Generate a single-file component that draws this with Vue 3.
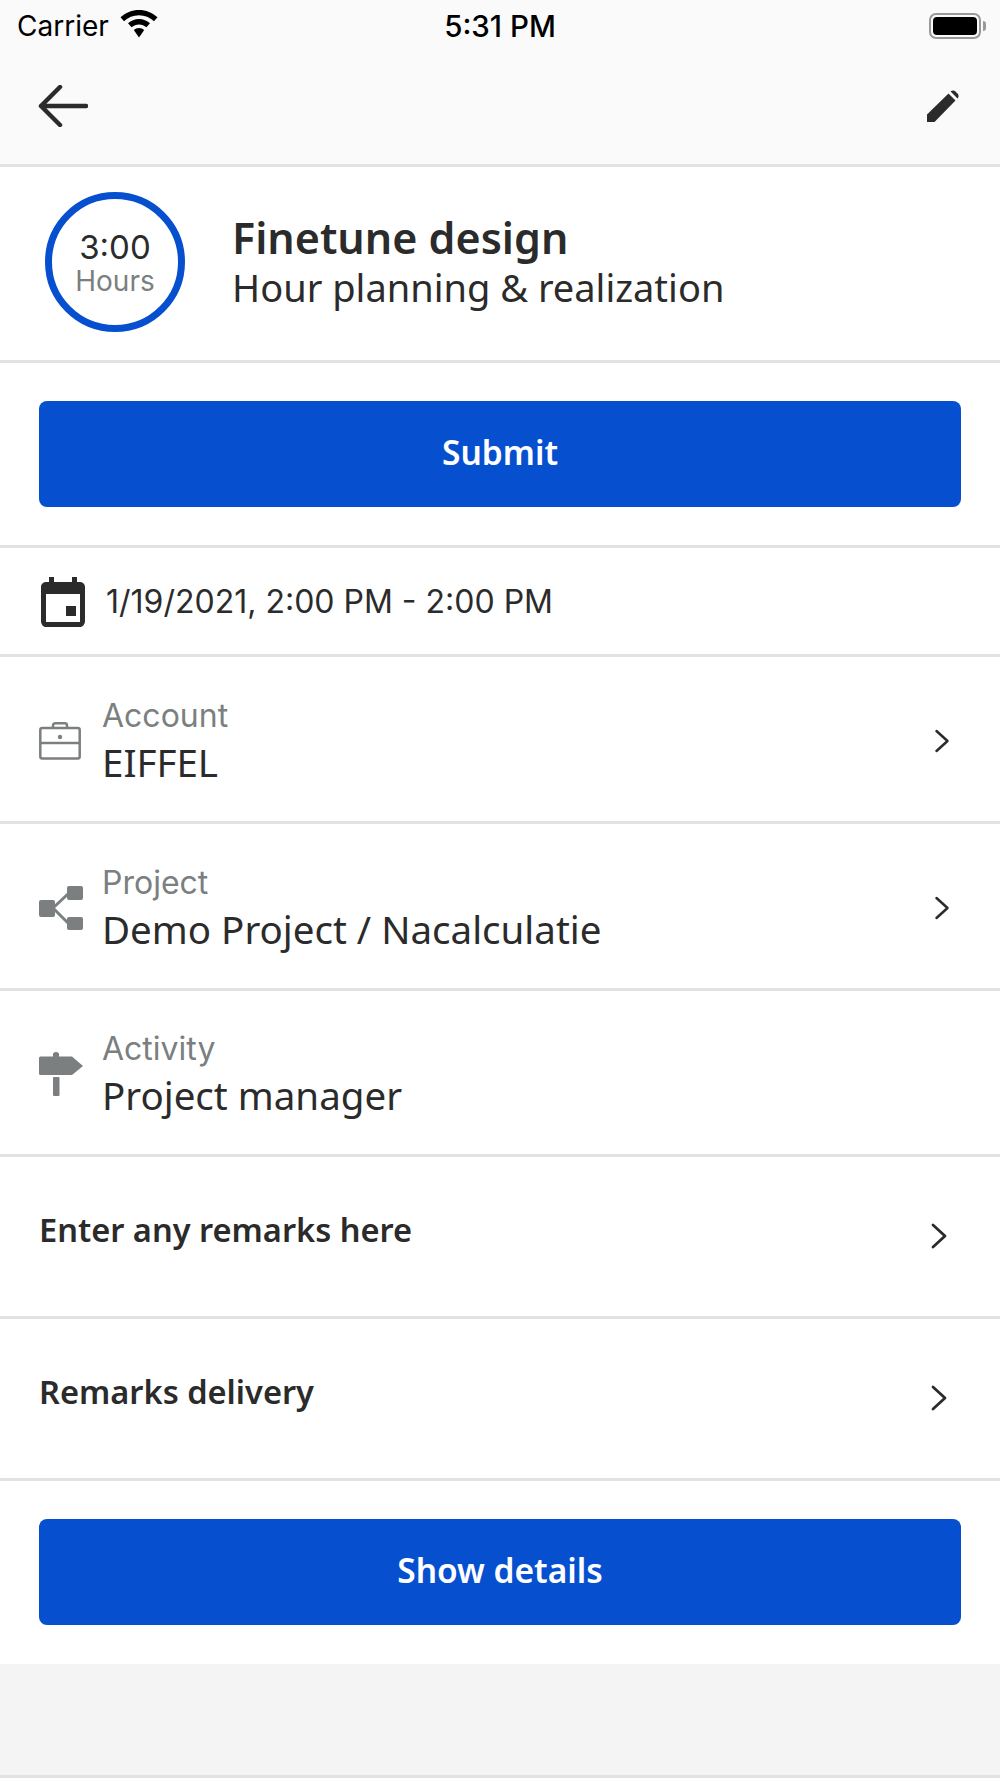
<script setup>
const infoRows = [
  { key: 'account', label: 'Account', value: 'EIFFEL', chevron: true },
  { key: 'project', label: 'Project', value: 'Demo Project / Nacalculatie', chevron: true },
  { key: 'activity', label: 'Activity', value: 'Project manager', chevron: false },
]
const remarkRows = ['Enter any remarks here', 'Remarks delivery']
</script>

<template>
  <div class="page">
    <!-- top bar -->
    <header class="top">
      <div class="status">
        <div class="status-left">
          <span class="carrier">Carrier</span>
          <svg class="wifi" width="38" height="28" viewBox="0 0 38 28">
            <path d="M19 0C12 0 5.500 2.700 0.500 7.300L4 11.200C8 7.500 13.300 5.200 19 5.200S30 7.500 34 11.200L37.500 7.300C32.500 2.700 26 0 19 0Z" />
            <path d="M19 9C14.800 9 11 10.600 8 13.300L11.600 17.300C13.600 15.500 16.200 14.400 19 14.400S24.400 15.500 26.400 17.300L30 13.300C27 10.600 23.200 9 19 9Z" />
            <path d="M19 18C17 18 15.200 18.700 13.800 20L19 27.500L24.200 20C22.800 18.700 21 18 19 18Z" />
          </svg>
        </div>
        <span class="time">5:31 PM</span>
        <div class="battery">
          <div class="battery-shell"><div class="battery-fill"></div></div>
          <div class="battery-nub"></div>
        </div>
      </div>
      <nav class="nav">
        <svg width="50" height="42" viewBox="0 0 50 42" fill="none" stroke="#2b2b2b" stroke-width="4.500" stroke-linecap="round" stroke-linejoin="round">
          <path d="M48 21H3M22 2L3 21L22 40" />
        </svg>
        <svg width="34" height="34" viewBox="0 0 34 34" fill="#2b2b2b">
          <path d="M1 25.500L22.500 4.500L29.500 11.500L8.500 33H1Z" />
          <path d="M24.800 2.300C26 1.100 28 1.100 29.200 2.300L31.700 4.800C32.900 6 32.900 8 31.700 9.200L31.500 9.400L24.600 2.500Z" />
        </svg>
      </nav>
    </header>

    <!-- summary -->
    <section class="summary">
      <div class="ring">
        <span class="ring-time">3:00</span>
        <span class="ring-unit">Hours</span>
      </div>
      <div>
        <div class="summary-title">Finetune design</div>
        <div class="summary-sub">Hour planning &amp; realization</div>
      </div>
    </section>

    <section class="action action-submit">
      <button class="btn">Submit</button>
    </section>

    <!-- date -->
    <section class="date-row">
      <svg class="date-icon" width="44" height="50" viewBox="0 0 44 50" fill="#2b2b2b">
        <path fill-rule="evenodd" d="M8 0H13V5H31V0H36V5H39C41.800 5 44 7.200 44 10V44C44 47.300 41.800 50 39 50H5C2.200 50 0 47.300 0 44V10C0 7.200 2.200 5 5 5H8ZM5 17V45H39V17Z" />
        <rect x="25" y="29" width="10" height="10" />
      </svg>
      <span class="date-text">1/19/2021, 2:00 PM - 2:00 PM</span>
    </section>

    <!-- account / project / activity -->
    <section v-for="row in infoRows" :key="row.key" class="info-row">
      <div class="info-icon">
        <svg v-if="row.key === 'account'" width="42" height="38" viewBox="0 0 42 38" fill="none" stroke="#7b7f7f" stroke-width="2.500" stroke-linejoin="round">
          <rect x="1.300" y="6" width="39.400" height="30.500" rx="2" />
          <path d="M1.300 21H40.700M14 6V3.500C14 2.300 15 1.300 16.200 1.300H25.800C27 1.300 28 2.300 28 3.500V6" />
          <circle cx="21" cy="15" r="2.200" fill="#7b7f7f" stroke="none" />
        </svg>
        <svg v-else-if="row.key === 'project'" width="44" height="44" viewBox="0 0 44 44" fill="#7b7f7f">
          <rect x="0" y="14" width="16" height="17" rx="2" />
          <rect x="28" y="0" width="16" height="14" rx="2" />
          <rect x="28" y="31" width="16" height="13" rx="2" />
          <path d="M14 22L30 7M14 22L30 38" fill="none" stroke="#7b7f7f" stroke-width="3" />
        </svg>
        <svg v-else width="44" height="44" viewBox="0 0 44 44" fill="#7b7f7f">
          <path d="M0 6C0 5 1 4.500 2 4.500H14V2C14 1 15 0 17 0S20 1 20 2V4.500H33L44 14L33 23H2C1 23 0 22.500 0 21.500Z" />
          <rect x="14" y="25" width="6.500" height="19" rx="1" />
        </svg>
      </div>
      <div class="info-body">
        <div class="info-label">{{ row.label }}</div>
        <div class="info-value">{{ row.value }}</div>
      </div>
      <svg v-if="row.chevron" class="chevron" width="16" height="24" viewBox="0 0 16 24" fill="none" stroke="#2b2b2b" stroke-width="2.500" stroke-linecap="round" stroke-linejoin="round">
        <path d="M2.500 2L13.500 12L2.500 22" />
      </svg>
    </section>

    <!-- remarks -->
    <section v-for="text in remarkRows" :key="text" class="remark-row">
      <span class="remark-text">{{ text }}</span>
      <svg class="remark-chevron" width="18" height="26" viewBox="0 0 18 26" fill="none" stroke="#2b2b2b" stroke-width="2.800" stroke-linecap="round" stroke-linejoin="round">
        <path d="M3 2L15 13L3 24" />
      </svg>
    </section>

    <section class="action action-details">
      <button class="btn">Show details</button>
    </section>

    <div class="footer"></div>
  </div>
</template>

<style>
body {
  background: #f4f4f4;
}
</style>

<style scoped>
.page {
  width: 1000px;
  height: 1778px;
  overflow: hidden;
  background: #fff;
  font-family: "Noto Sans", Lato, sans-serif;
  color: #2b2b2b;
}

/* top bar */
.top {
  height: 167px;
  box-sizing: border-box;
  background: #fafafa;
  border-bottom: 3px solid #e0e3e3;
}
.status {
  height: 52px;
  display: grid;
  grid-template-columns: 1fr auto 1fr;
  align-items: center;
  font-family: Inter, sans-serif;
  color: #000;
}
.status-left {
  display: flex;
  align-items: center;
  gap: 11px;
  padding-left: 17px;
}
.carrier {
  font-size: 28px;
}
.wifi {
  fill: #000;
  margin-top: -4px;
}
.time {
  font-size: 29.500px;
  font-weight: 500;
}
.battery {
  display: flex;
  align-items: center;
  justify-content: flex-end;
  gap: 2px;
  padding-right: 14px;
}
.battery-shell {
  width: 52px;
  height: 26px;
  box-sizing: border-box;
  border: 2px solid #999;
  border-radius: 7px;
  padding: 2px;
}
.battery-fill {
  height: 100%;
  background: #000;
  border-radius: 4px;
}
.battery-nub {
  width: 3px;
  height: 10px;
  background: #999;
  border-radius: 0 3px 3px 0;
}
.nav {
  height: 112px;
  display: flex;
  align-items: center;
  justify-content: space-between;
  padding: 0 40px 4px 38px;
  box-sizing: border-box;
}

/* summary */
.summary {
  height: 196px;
  box-sizing: border-box;
  border-bottom: 3px solid #e0e3e3;
  display: flex;
  align-items: center;
  gap: 47px;
  padding: 0 0 3px 45px;
}
.ring {
  width: 140px;
  height: 140px;
  box-sizing: border-box;
  border: 7px solid #0650d0;
  border-radius: 50%;
  display: flex;
  flex-direction: column;
  align-items: center;
  justify-content: center;
  padding-top: 2px;
  font-family: Inter, sans-serif;
}
.ring-time {
  font-size: 33px;
  line-height: 36px;
}
.ring-unit {
  font-size: 28px;
  line-height: 32px;
  color: #7b7f7f;
}
.summary-title {
  font-size: 43px;
  font-weight: 600;
  line-height: 50px;
}
.summary-sub {
  font-size: 38px;
  line-height: 48px;
}

/* buttons */
.action {
  box-sizing: border-box;
  padding: 38px 39px;
}
.action-submit {
  height: 185px;
  border-bottom: 3px solid #e0e3e3;
}
.action-details {
  height: 183px;
  background: #fff;
}
.btn {
  display: block;
  width: 100%;
  height: 106px;
  padding: 0 0 4px;
  border: 0;
  border-radius: 8px;
  background: #0650d0;
  color: #fff;
  font: 600 33.500px "Noto Sans", sans-serif;
}

/* date */
.date-row {
  height: 109px;
  box-sizing: border-box;
  border-bottom: 3px solid #e0e3e3;
  display: flex;
  align-items: center;
  gap: 21px;
  padding: 1px 0 0 41px;
}
.date-text {
  font-family: Inter, sans-serif;
  font-size: 32px;
}

/* info rows */
.info-row {
  height: 167px;
  box-sizing: border-box;
  border-bottom: 3px solid #e0e3e3;
  display: flex;
  align-items: center;
  padding: 3px 50px 0 39px;
}
.info-row:nth-of-type(n + 6) {
  height: 166px;
}
.info-icon {
  width: 63px;
  flex: none;
  display: flex;
}
.info-body {
  flex: 1;
}
.info-label {
  font-family: Inter, sans-serif;
  font-size: 32px;
  line-height: 42px;
  color: #7b7f7f;
}
.info-value {
  font-size: 38.500px;
  line-height: 50px;
}

/* remarks */
.remark-row {
  height: 162px;
  box-sizing: border-box;
  border-bottom: 3px solid #e0e3e3;
  display: flex;
  justify-content: space-between;
  align-items: flex-start;
  padding: 51px 52px 0 39px;
}
.remark-text {
  font-size: 32.600px;
  font-weight: 600;
  line-height: 44px;
}
.remark-chevron {
  margin-top: 15px;
}

.footer {
  height: 114px;
  box-sizing: border-box;
  background: #f4f4f4;
  border-bottom: 3px solid #e0e3e3;
}
</style>
